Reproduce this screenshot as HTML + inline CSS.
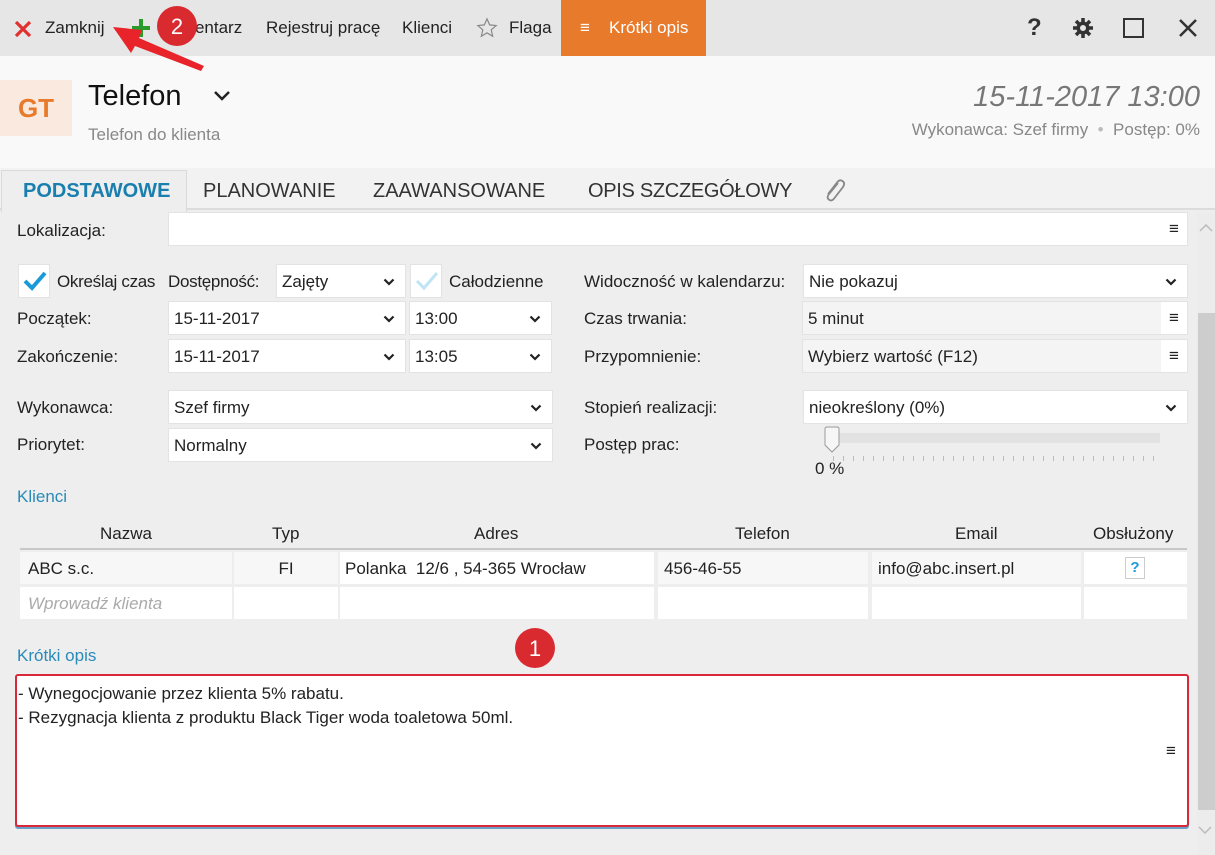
<!DOCTYPE html>
<html><head><meta charset="utf-8"><style>
*{margin:0;padding:0;box-sizing:border-box}
body{width:1215px;height:855px;overflow:hidden;background:#eeeeee;font-family:"Liberation Sans",sans-serif;font-size:17px;color:#222;position:relative}
.a{position:absolute;white-space:nowrap}
.in{position:absolute;background:#fff;border:1px solid #e3e3e3;height:34px;line-height:34px;padding-left:5px}
.gr{background:#f4f4f4}
.ch{position:absolute;right:10px;top:13px;width:12px;height:8px}
.mn{position:absolute;right:0;top:0;width:26px;height:32px;background:#fff;text-align:center;font-size:17px;font-weight:bold;line-height:31px}
.lbl{position:absolute;white-space:nowrap;line-height:20px}
.cell{position:absolute;background:#fff;height:32px;line-height:34px;padding-left:8px}
</style></head><body>
<svg width="0" height="0" style="position:absolute"><defs><symbol id="cv" viewBox="0 0 12 8"><path d="M1.5 1.5L6 6L10.5 1.5" stroke="#222" stroke-width="2.2" fill="none"/></symbol></defs></svg>
<!-- toolbar -->
<div class="a" style="left:0;top:0;width:1215px;height:56px;background:#e6e6e6"></div>
<svg class="a" style="left:14px;top:20px" width="18" height="18"><path d="M2 2L16 16M16 2L2 16" stroke="#e03030" stroke-width="3.2"/></svg>
<div class="a" style="left:45px;top:18px">Zamknij</div>
<svg class="a" style="left:131px;top:18px" width="20" height="20"><path d="M10 1V19M1 10H19" stroke="#2a9a2a" stroke-width="4"/></svg>
<div class="a" style="left:160px;top:18px">Komentarz</div>
<div class="a" style="left:266px;top:18px">Rejestruj pracę</div>
<div class="a" style="left:402px;top:18px">Klienci</div>
<svg class="a" style="left:476px;top:17px" width="22" height="22" viewBox="0 0 24 24"><path d="M12 2L14.9 8.6L22 9.3L16.6 14L18.2 21L12 17.3L5.8 21L7.4 14L2 9.3L9.1 8.6Z" fill="none" stroke="#888" stroke-width="1.3"/></svg>
<div class="a" style="left:509px;top:18px">Flaga</div>
<div class="a" style="left:561px;top:0;width:145px;height:56px;background:#e87a2c;color:#fff"><span class="a" style="left:19px;top:18px">≡</span><span class="a" style="left:48px;top:18px">Krótki opis</span></div>
<div class="a" style="left:1027px;top:14px;font-size:24px;font-weight:bold;color:#333">?</div>
<svg class="a" style="left:1072px;top:17px" width="22" height="22" viewBox="0 0 22 22"><g stroke="#333" stroke-width="3.5"><line x1="11" y1="1" x2="11" y2="21"/><line x1="1" y1="11" x2="21" y2="11"/><line x1="4" y1="4" x2="18" y2="18"/><line x1="18" y1="4" x2="4" y2="18"/></g><circle cx="11" cy="11" r="6.5" fill="#333"/><circle cx="11" cy="11" r="3" fill="#e6e6e6"/></svg>
<div class="a" style="left:1123px;top:18px;width:21px;height:20px;border:2.5px solid #333"></div>
<svg class="a" style="left:1178px;top:18px" width="20" height="20"><path d="M2 2L18 18M18 2L2 18" stroke="#333" stroke-width="2.5"/></svg>
<!-- header -->
<div class="a" style="left:0;top:56px;width:1215px;height:112px;background:#f9f9f9"></div>
<div class="a" style="left:0;top:80px;width:72px;height:56px;background:#f9e9df;color:#e87a2c;font-size:26px;font-weight:bold;text-align:center;line-height:56px">GT</div>
<div class="a" style="left:88px;top:80px;font-size:29px;color:#111">Telefon</div>
<svg class="a" style="left:213px;top:90px" width="18" height="12"><path d="M2 2L9 9L16 2" stroke="#222" stroke-width="2.5" fill="none"/></svg>
<div class="a" style="left:88px;top:125px;color:#888">Telefon do klienta</div>
<div class="a" style="right:15px;top:81px;font-size:29px;font-style:italic;color:#777">15-11-2017 13:00</div>
<div class="a" style="right:15px;top:120px;color:#888">Wykonawca: Szef firmy &nbsp;<span style="color:#bbb">•</span>&nbsp; Postęp: 0%</div>
<!-- tabs -->
<div class="a" style="left:0;top:168px;width:1215px;height:42px;background:#f2f2f2;border-bottom:2px solid #dcdcdc"></div>
<div class="a" style="left:1px;top:170px;width:186px;height:42px;background:#eeeeee;border:1px solid #dadada;border-bottom:none"></div>
<div class="a" style="left:23px;top:180px;font-size:20px;font-weight:bold;color:#1a7fae">PODSTAWOWE</div>
<div class="a" style="left:203px;top:180px;font-size:20px;color:#333">PLANOWANIE</div>
<div class="a" style="left:373px;top:180px;font-size:20px;color:#333">ZAAWANSOWANE</div>
<div class="a" style="left:588px;top:180px;font-size:20px;color:#333;letter-spacing:-0.3px">OPIS SZCZEGÓŁOWY</div>
<svg class="a" style="left:822px;top:176px" width="24" height="28" viewBox="0 0 24 28"><path d="M16 7L7 18Q4 22 7.5 24Q10 25.5 12.5 22L21 11Q23.5 7 20.5 5Q17.5 3 15 6.5L6 18" fill="none" stroke="#888" stroke-width="1.8"/></svg>
<!-- scrollbar -->
<div class="a" style="left:1197px;top:213px;width:18px;height:642px;background:#ececec"></div>
<div class="a" style="left:1198px;top:313px;width:17px;height:497px;background:#cdcdcd"></div>
<svg class="a" style="left:1199px;top:224px" width="14" height="8"><path d="M1 7L7 1L13 7" stroke="#bbb" stroke-width="1.5" fill="none"/></svg>
<!-- form -->
<div class="lbl" style="left:17px;top:221px">Lokalizacja:</div>
<div class="in" style="left:168px;top:212px;width:1020px"><span class="mn">≡</span></div>
<div class="a" style="left:18px;top:264px;width:32px;height:34px;background:#fff;border:1px solid #e3e3e3"></div>
<svg class="a" style="left:22px;top:270px" width="26" height="22"><path d="M3 11L10 18L23 3" stroke="#1a9ad8" stroke-width="4" fill="none"/></svg>
<div class="lbl" style="left:57px;top:272px;letter-spacing:-0.3px">Określaj czas</div>
<div class="lbl" style="left:168px;top:272px;letter-spacing:-0.3px">Dostępność:</div>
<div class="in" style="left:276px;top:264px;width:130px">Zajęty<svg class="ch"><use href="#cv"/></svg></div>
<div class="a" style="left:410px;top:264px;width:32px;height:34px;background:#fff;border:1px solid #e3e3e3"></div>
<svg class="a" style="left:414px;top:270px" width="26" height="22"><path d="M3 11L10 18L23 3" stroke="#bfe4f3" stroke-width="3" fill="none"/></svg>
<div class="lbl" style="left:449px;top:272px">Całodzienne</div>
<div class="lbl" style="left:17px;top:309px">Początek:</div>
<div class="in" style="left:168px;top:301px;width:238px">15-11-2017<svg class="ch"><use href="#cv"/></svg></div>
<div class="in" style="left:409px;top:301px;width:143px">13:00<svg class="ch"><use href="#cv"/></svg></div>
<div class="lbl" style="left:17px;top:347px">Zakończenie:</div>
<div class="in" style="left:168px;top:339px;width:238px">15-11-2017<svg class="ch"><use href="#cv"/></svg></div>
<div class="in" style="left:409px;top:339px;width:143px">13:05<svg class="ch"><use href="#cv"/></svg></div>
<div class="lbl" style="left:17px;top:398px">Wykonawca:</div>
<div class="in" style="left:168px;top:390px;width:385px">Szef firmy<svg class="ch"><use href="#cv"/></svg></div>
<div class="lbl" style="left:17px;top:435px">Priorytet:</div>
<div class="in" style="left:168px;top:428px;width:385px">Normalny<svg class="ch"><use href="#cv"/></svg></div>
<div class="lbl" style="left:584px;top:272px">Widoczność w kalendarzu:</div>
<div class="in" style="left:803px;top:264px;width:385px">Nie pokazuj<svg class="ch"><use href="#cv"/></svg></div>
<div class="lbl" style="left:584px;top:309px">Czas trwania:</div>
<div class="in gr" style="left:802px;top:301px;width:386px">5 minut<span class="mn">≡</span></div>
<div class="lbl" style="left:584px;top:347px">Przypomnienie:</div>
<div class="in gr" style="left:802px;top:339px;width:386px">Wybierz wartość (F12)<span class="mn">≡</span></div>
<div class="lbl" style="left:584px;top:398px">Stopień realizacji:</div>
<div class="in" style="left:803px;top:390px;width:385px">nieokreślony (0%)<svg class="ch"><use href="#cv"/></svg></div>
<div class="lbl" style="left:584px;top:435px">Postęp prac:</div>
<div class="a" style="left:828px;top:433px;width:332px;height:10px;background:#e2e2e2"></div>
<svg class="a" style="left:824px;top:426px" width="16" height="27"><path d="M1 3Q1 1 3 1H13Q15 1 15 3V19L8 26L1 19Z" fill="#f6f6f6" stroke="#999"/></svg>
<div class="a" style="left:833px;top:456px;width:327px;height:5px;background:repeating-linear-gradient(90deg,#bbb 0 1px,transparent 1px 10px)"></div>
<div class="lbl" style="left:815px;top:459px">0 %</div>
<!-- clients -->
<div class="lbl" style="left:17px;top:487px;color:#2a8ab8">Klienci</div>
<div class="lbl" style="left:100px;top:524px">Nazwa</div>
<div class="lbl" style="left:272px;top:524px">Typ</div>
<div class="lbl" style="left:474px;top:524px">Adres</div>
<div class="lbl" style="left:735px;top:524px">Telefon</div>
<div class="lbl" style="left:955px;top:524px">Email</div>
<div class="lbl" style="left:1093px;top:524px">Obsłużony</div>
<div class="a" style="left:20px;top:548px;width:1167px;height:2px;background:#c8c8c8"></div>
<div class="cell" style="left:20px;top:552px;width:212px;background:#f7f7f7">ABC s.c.</div>
<div class="cell" style="left:234px;top:552px;width:104px;background:#f7f7f7;padding:0;text-align:center">FI</div>
<div class="cell" style="left:340px;top:552px;width:314px;padding-left:5px">Polanka &nbsp;12/6 , 54-365 Wrocław</div>
<div class="cell" style="left:658px;top:552px;width:210px;background:#f7f7f7;padding-left:6px">456-46-55</div>
<div class="cell" style="left:872px;top:552px;width:209px;background:#f7f7f7;padding-left:6px">info@abc.insert.pl</div>
<div class="cell" style="left:1084px;top:552px;width:103px"><span class="a" style="left:41px;top:5px;width:20px;height:22px;border:1px solid #ccc;color:#1a9ad8;font-weight:bold;text-align:center;line-height:20px;font-size:15px">?</span></div>
<div class="cell" style="left:20px;top:587px;width:212px;color:#aaa;font-style:italic">Wprowadź klienta</div>
<div class="cell" style="left:234px;top:587px;width:104px"></div>
<div class="cell" style="left:340px;top:587px;width:314px"></div>
<div class="cell" style="left:658px;top:587px;width:210px"></div>
<div class="cell" style="left:872px;top:587px;width:209px"></div>
<div class="cell" style="left:1084px;top:587px;width:103px"></div>
<!-- short desc -->
<div class="lbl" style="left:17px;top:646px;color:#2a8ab8">Krótki opis</div>
<div class="a" style="left:15px;top:674px;width:1174px;height:153px;background:#fff;border:2px solid #d8283a;border-radius:3px;box-shadow:0 2px 0 #6aa0c8"></div>
<div class="lbl" style="left:18px;top:684px">- Wynegocjowanie przez klienta 5% rabatu.</div>
<div class="lbl" style="left:18px;top:708px">- Rezygnacja klienta z produktu Black Tiger woda toaletowa 50ml.</div>
<div class="lbl" style="left:1166px;top:741px;font-weight:bold">≡</div>
<svg class="a" style="left:1198px;top:826px" width="14" height="8"><path d="M1 1L7 7L13 1" stroke="#bbb" stroke-width="1.5" fill="none"/></svg>
<!-- annotations -->
<svg class="a" style="left:0;top:0" width="1215" height="855">
<path d="M113 27L142 30L139 38L204 66L201 71L135 46L131 53Z" fill="#e8242a"/>
<circle cx="177" cy="26" r="20" fill="#d92a30"/>
<circle cx="535" cy="648" r="20" fill="#d92a30"/>
<text x="177" y="34" font-family="Liberation Sans" font-size="22" fill="#fff" text-anchor="middle">2</text>
<text x="535" y="656" font-family="Liberation Sans" font-size="22" fill="#fff" text-anchor="middle">1</text>
</svg>
</body></html>
